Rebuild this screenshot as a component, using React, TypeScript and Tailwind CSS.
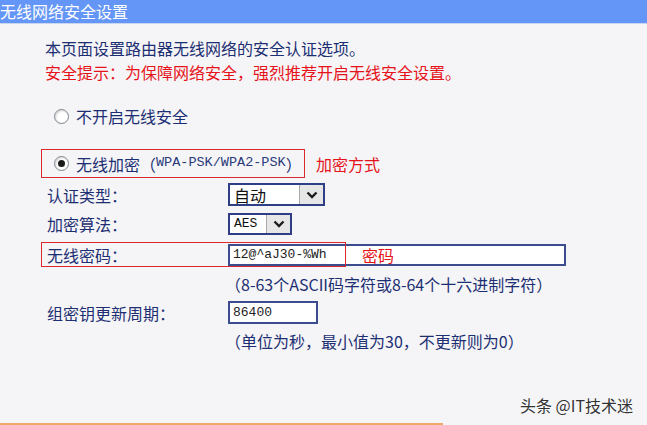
import { ReactNode } from "react";

const cjk = "font-['Noto_Sans_CJK_SC','Noto_Sans',sans-serif]";
const mono = "font-['Liberation_Mono','Noto_Sans_CJK_SC',monospace]";

function Radio({ checked }: { checked?: boolean }) {
    return (
        <span className="w-[15px] h-[15px] rounded-full border border-[#7d838e] bg-white flex items-center justify-center shrink-0 shadow-[inset_1px_1px_2px_rgba(0,0,0,0.18)]">
            {checked && <span className="w-[7px] h-[7px] rounded-full bg-[#1a1a1a]" />}
        </span>
    );
}

function Chevron() {
    return (
        <svg width="12" height="8" viewBox="0 0 12 8">
            <path d="M1.5 1.5 L6 6 L10.5 1.5" fill="none" stroke="#1c1c1c" strokeWidth="2.4" />
        </svg>
    );
}

function Select({ value, width }: { value: string; width: string }) {
    return (
        <div className={`${width} h-full border-2 border-[#2f3f86] bg-white flex items-stretch`}>
            <span className={`flex-1 pl-[4px] flex items-center text-[#111] ${value === "AES" ? mono + " text-[13px]" : "text-[16px]"}`}>
                {value}
            </span>
            <span className="w-[24px] bg-[#e6e6e6] border-l border-[#a9a9a9] flex items-center justify-center">
                <Chevron />
            </span>
        </div>
    );
}

function Row({ label, children, height, className = "" }: { label: string; children: ReactNode; height: string; className?: string }) {
    return (
        <div className={`flex items-center ${height} ${className}`}>
            <span className="w-[187px] pl-[6px] shrink-0">{label}</span>
            {children}
        </div>
    );
}

export default function App() {
    return (
        <div className={`w-[647px] h-[425px] bg-[#f5f5f7] relative overflow-hidden text-[16px] text-[#1d2f73] ${cjk}`}>
            {/* title bar */}
            <div className="h-[24px] bg-[#6496f7] text-white text-[16px] leading-[16px] flex items-end pb-[4px] border-b border-[#c9d6ee]">
                无线网络安全设置
            </div>

            <div className="pl-[41px] pt-[12px] flex flex-col">
                <p className="pl-[4px] leading-[24px]">本页面设置路由器无线网络的安全认证选项。</p>
                <p className="pl-[4px] leading-[24px] text-[#e5141b]">安全提示：为保障网络安全，强烈推荐开启无线安全设置。</p>

                <div className="mt-[20px] h-[24px] flex items-center pl-[13px] gap-[7px]">
                    <Radio />
                    <span>不开启无线安全</span>
                </div>

                {/* wpa option, outlined */}
                <div className="mt-[21px] flex items-center">
                    <div className="w-[264px] h-[29px] border-[1.5px] border-[#da2a2f] flex items-center pl-[12px] gap-[7px]">
                        <Radio checked />
                        <span className="flex items-center">
                            无线加密（<span className={`${mono} text-[13.5px] text-[#2a3a7a]`}>WPA-PSK/WPA2-PSK</span>）
                        </span>
                    </div>
                    <span className="ml-[11px] text-[#e5141b]">加密方式</span>
                </div>

                <Row label="认证类型：" height="h-[23px]" className="mt-[5px]">
                    <Select value="自动" width="w-[97px]" />
                </Row>

                <Row label="加密算法：" height="h-[22px]" className="mt-[7px]">
                    <Select value="AES" width="w-[64px]" />
                </Row>

                <div className="relative mt-[7px]">
                    <Row label="无线密码：" height="h-[25px]">
                        <div className={`w-[338px] h-[22px] border-2 border-[#3b4d8f] bg-white flex items-center pl-[3px] ${mono} text-[13px] text-[#222]`}>
                            12@^aJ30-%Wh
                        </div>
                    </Row>
                    <div className="absolute left-0 top-0 w-[305px] h-[25px] border-[1.5px] border-[#da2a2f]" />
                    <span className="absolute left-[321px] top-0 h-[25px] flex items-center text-[#e5141b]">密码</span>
                </div>

                <p className="pl-[184px] mt-[5px] leading-[24px]">（8-63个ASCII码字符或8-64个十六进制字符）</p>

                <Row label="组密钥更新周期：" height="h-[23px]" className="mt-[5px]">
                    <div className={`w-[90px] h-full border-2 border-[#3b4d8f] bg-white flex items-center pl-[3px] ${mono} text-[13px] text-[#222]`}>
                        86400
                    </div>
                </Row>

                <p className="pl-[184px] mt-[5px] leading-[24px]">（单位为秒，最小值为30，不更新则为0）</p>
            </div>

            {/* watermark */}
            <span className="absolute right-[14px] top-[393px] text-[16px] text-[#333] [text-shadow:0_0_2px_#fff]">头条 @IT技术迷</span>
            <div className="absolute left-0 bottom-0 w-[443px] h-[2px] bg-[#f2a868]" />
        </div>
    );
}
